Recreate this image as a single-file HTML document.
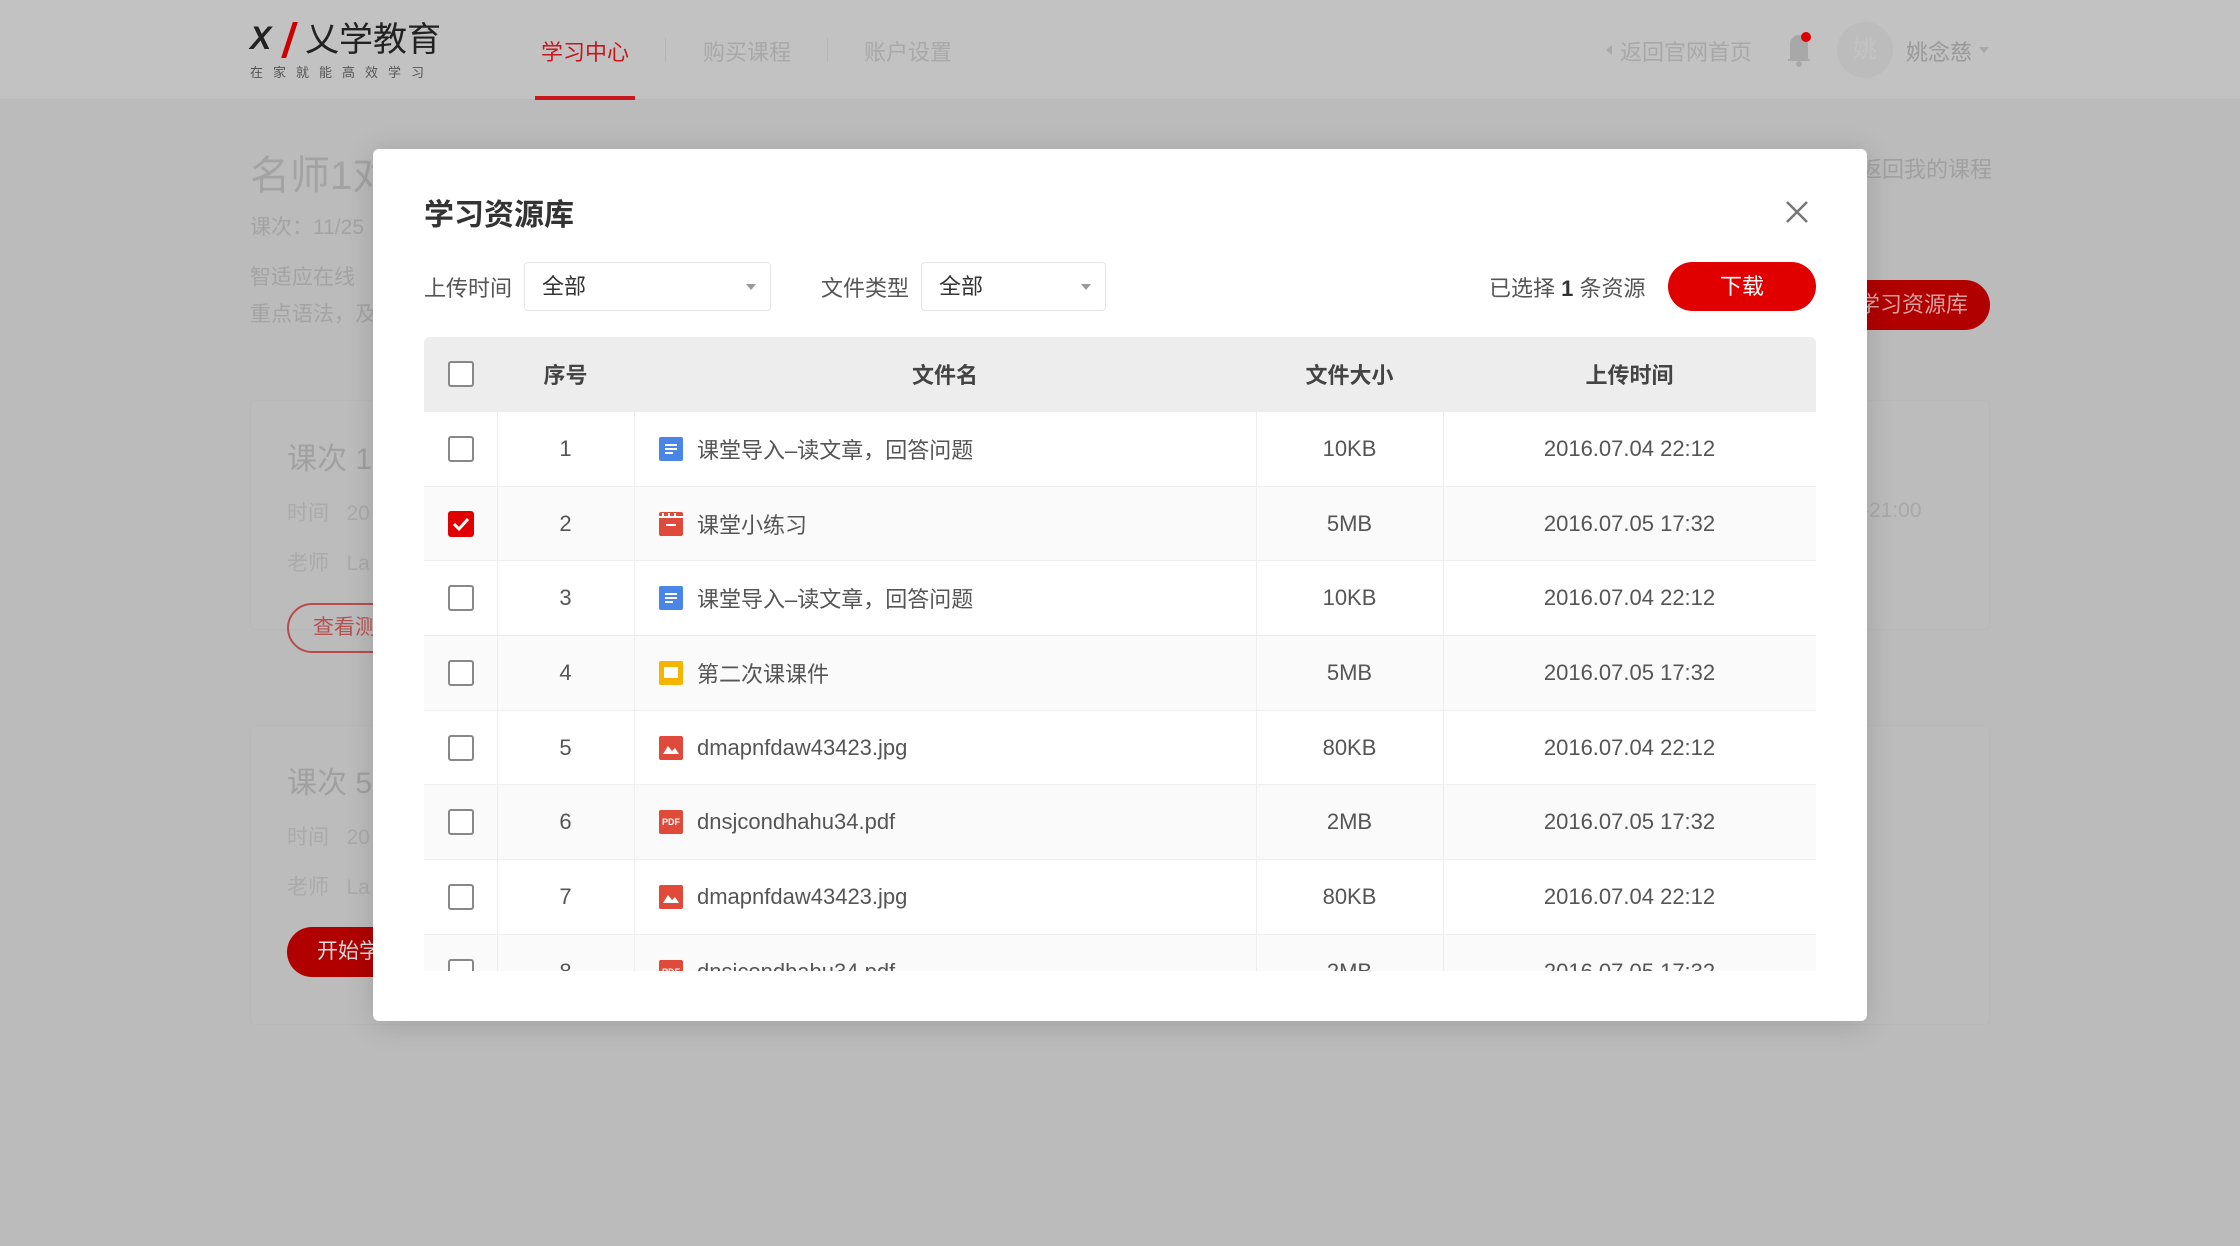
<!DOCTYPE html>
<html><head><meta charset="utf-8"><style>
*{box-sizing:border-box;margin:0;padding:0}
body{width:2240px;height:1246px;overflow:hidden;background:#bbbbbb;font-family:"Liberation Sans","Noto Sans CJK SC",sans-serif;position:relative}
.a{position:absolute;white-space:nowrap}
.hdr{position:absolute;left:0;top:0;width:2240px;height:100px;background:#c2c2c2;border-bottom:1px solid #b8b8b8}
.card{position:absolute;left:250px;width:1740px;background:#bcbcbc;border:1px solid #b8b8b8;border-radius:6px}
.modal{position:absolute;left:373px;top:149px;width:1494px;height:872px;background:#fff;border-radius:6px;box-shadow:0 4px 30px rgba(0,0,0,.15)}
.sel{position:absolute;top:113px;height:49px;border:1px solid #e6e6e6;border-radius:4px;font-size:22px;color:#333;padding-left:17px;line-height:47px}
.sel:after{content:"";position:absolute;right:14px;top:21px;border:5px solid transparent;border-top:6px solid #999}
.tbl{position:absolute;left:51px;top:188px;width:1392px;height:634px;overflow:hidden}
.th{height:74px;background:#ededed;border-radius:6px 6px 0 0;position:relative;font-size:22px;font-weight:bold;color:#444}
.row{height:74.7px;position:relative;border-top:1px solid #eee;font-size:22px;color:#555}
.row.e{background:#fafafa}
.c{position:absolute;top:0;height:100%;display:flex;align-items:center;justify-content:center}
.cb{width:26px;height:26px;border:2px solid #888;border-radius:3px;background:#fff}
.vl{position:absolute;top:0;bottom:0;width:1px;background:#eee}
.ic{width:24px;height:24px;border-radius:2px;margin-right:14px;display:inline-block;position:relative;flex:none}
</style></head><body>
<div class="hdr"></div>
<div class="a" style="left:250px;top:20px;font-size:32px;font-weight:900;color:#222;font-style:italic">X</div>
<div class="a" style="left:287px;top:22px;width:5px;height:36px;background:#c00;transform:skewX(-18deg)"></div>
<div class="a" style="left:305px;top:20px;font-size:34px;color:#222;line-height:40px">乂学教育</div>
<div class="a" style="left:250px;top:62px;font-size:13px;color:#555;letter-spacing:10px">在家就能高效学习</div>
<div class="a" style="left:541px;top:35px;font-size:22px;color:#c8161d">学习中心</div>
<div class="a" style="left:535px;top:96px;width:100px;height:4px;background:#c8161d"></div>
<div class="a" style="left:665px;top:38px;width:1px;height:24px;background:#b5b5b5"></div>
<div class="a" style="left:703px;top:35px;font-size:22px;color:#a8a8a8">购买课程</div>
<div class="a" style="left:827px;top:38px;width:1px;height:24px;background:#b5b5b5"></div>
<div class="a" style="left:864px;top:35px;font-size:22px;color:#a8a8a8">账户设置</div>
<div class="a" style="left:1606px;top:45px;border:5px solid transparent;border-right:6px solid #a8a8a8;border-left:0"></div>
<div class="a" style="left:1620px;top:35px;font-size:22px;color:#a8a8a8">返回官网首页</div>
<svg class="a" style="left:1778px;top:30px" width="34" height="38" viewBox="0 0 34 38"><path d="M13 30 V14 a8 8 0 0 1 16 0 V30 Z M10 30 h22" fill="#a8a8a8" stroke="#a8a8a8" stroke-width="2"/><circle cx="21" cy="34" r="3" fill="#a8a8a8"/><circle cx="28" cy="7" r="5" fill="#d00"/></svg>
<div class="a" style="left:1837px;top:22px;width:56px;height:56px;border-radius:50%;background:#bcbcbc;font-size:24px;color:#c3c3c3;text-align:center;line-height:56px">姚</div>
<div class="a" style="left:1906px;top:35px;font-size:22px;color:#999">姚念慈</div>
<div class="a" style="left:1979px;top:47px;border:5px solid transparent;border-top:6px solid #a8a8a8"></div>
<div class="a" style="left:250px;top:143px;font-size:40px;color:#a3a3a3">名师1对</div>
<div class="a" style="left:250px;top:211px;font-size:21px;color:#a3a3a3">课次：11/25</div>
<div class="a" style="left:250px;top:261px;font-size:21px;color:#a3a3a3">智适应在线</div>
<div class="a" style="left:250px;top:298px;font-size:21px;color:#a3a3a3">重点语法，及</div>
<div class="a" style="left:1860px;top:152px;font-size:22px;color:#a0a0a0">返回我的课程</div>
<div class="a" style="left:1800px;top:280px;width:190px;height:50px;border-radius:25px;background:#b00000;color:#d9a0a0;font-size:22px;line-height:50px;padding-left:58px">学习资源库</div>
<div class="card" style="top:400px;height:230px"></div>
<div class="card" style="top:725px;height:300px"></div>
<div class="a" style="left:287px;top:434px;font-size:30px;color:#a0a0a0">课次 1</div>
<div class="a" style="left:287px;top:497px;font-size:21px;color:#aaa">时间&nbsp;&nbsp;&nbsp;20</div>
<div class="a" style="left:287px;top:547px;font-size:21px;color:#aaa">老师&nbsp;&nbsp;&nbsp;La</div>
<div class="a" style="left:287px;top:603px;width:120px;height:50px;border:2px solid #b84c4c;border-radius:25px;font-size:21px;color:#b85050;line-height:46px;padding-left:24px">查看测</div>
<div class="a" style="left:1862px;top:499px;font-size:21px;color:#a8a8a8">-21:00</div>
<div class="a" style="left:287px;top:758px;font-size:30px;color:#a0a0a0">课次 5</div>
<div class="a" style="left:287px;top:821px;font-size:21px;color:#aaa">时间&nbsp;&nbsp;&nbsp;20</div>
<div class="a" style="left:287px;top:871px;font-size:21px;color:#aaa">老师&nbsp;&nbsp;&nbsp;La</div>
<div class="a" style="left:287px;top:927px;width:120px;height:50px;background:#b00000;border-radius:25px;font-size:21px;color:#ddd;line-height:50px;padding-left:30px">开始学</div>
<div class="modal">
 <div class="a" style="left:51px;top:41px;font-size:30px;font-weight:bold;color:#333">学习资源库</div>
 <svg class="a" style="left:1412px;top:51px" width="24" height="24"><path d="M2 2L22 22M22 2L2 22" stroke="#777" stroke-width="2.5"/></svg>
 <div class="a" style="left:51px;top:122px;font-size:22px;color:#555">上传时间</div>
 <div class="sel" style="left:151px;width:247px">全部</div>
 <div class="a" style="left:448px;top:122px;font-size:22px;color:#555">文件类型</div>
 <div class="sel" style="left:548px;width:185px">全部</div>
 <div class="a" style="left:1116px;top:122px;font-size:22px;color:#555">已选择 <b style="color:#333">1</b> 条资源</div>
 <div class="a" style="left:1295px;top:113px;width:148px;height:49px;border-radius:25px;background:#e00000;color:#fff;font-size:22px;text-align:center;line-height:49px">下载</div>
 <div class="tbl">
  <div class="th">
   <div class="c" style="left:0;width:73px"><div class="cb"></div></div>
   <div class="c" style="left:73px;width:137px">序号</div>
   <div class="c" style="left:210px;width:622px">文件名</div>
   <div class="c" style="left:832px;width:187px">文件大小</div>
   <div class="c" style="left:1019px;width:373px">上传时间</div>
  </div>
  <div id="rows"></div>
  <div class="vl" style="left:73px;top:74px"></div><div class="vl" style="left:210px;top:74px"></div><div class="vl" style="left:832px;top:74px"></div><div class="vl" style="left:1019px;top:74px"></div>
 </div>
</div>
<script>
var d=[["doc","课堂导入–读文章，回答问题","10KB","2016.07.04 22:12"],["cal","课堂小练习","5MB","2016.07.05 17:32"],["doc","课堂导入–读文章，回答问题","10KB","2016.07.04 22:12"],["ppt","第二次课课件","5MB","2016.07.05 17:32"],["img","dmapnfdaw43423.jpg","80KB","2016.07.04 22:12"],["pdf","dnsjcondhahu34.pdf","2MB","2016.07.05 17:32"],["img","dmapnfdaw43423.jpg","80KB","2016.07.04 22:12"],["pdf","dnsjcondhahu34.pdf","2MB","2016.07.05 17:32"]];
var ic={doc:'<span class="ic" style="background:#4a86e8"><svg width="24" height="24"><path d="M6 8h12M6 12h12M6 16h8" stroke="#fff" stroke-width="2"/></svg></span>',
cal:'<span class="ic" style="background:#e04a3b"><svg width="24" height="24"><path d="M0 5h24M7 13h10" stroke="#fff" stroke-width="2"/><path d="M4 1v3M10 1v3M16 1v3" stroke="#fff" stroke-width="2"/></svg></span>',
ppt:'<span class="ic" style="background:#f4b400"><svg width="24" height="24"><rect x="5" y="6" width="14" height="11" fill="#fff"/></svg></span>',
img:'<span class="ic" style="background:#e04a3b"><svg width="24" height="24"><path d="M4 18l5-8 4 5 3-3 4 6z" fill="#fff"/></svg></span>',
pdf:'<span class="ic" style="background:#e04a3b;color:#fff;font-size:9px;font-weight:bold;text-align:center;line-height:24px">PDF</span>'};
var h="";d.forEach(function(r,i){h+='<div class="row'+(i%2?' e':'')+'"><div class="c" style="left:0;width:73px">'+(i==1?'<div class="cb" style="background:#e00000;border-color:#e00000"><svg width="22" height="22"><path d="M4 11l5 5 9-10" stroke="#fff" stroke-width="3" fill="none"/></svg></div>':'<div class="cb"></div>')+'</div><div class="c" style="left:73px;width:137px">'+(i+1)+'</div><div class="c" style="left:235px;justify-content:flex-start">'+ic[r[0]]+r[1]+'</div><div class="c" style="left:832px;width:187px">'+r[2]+'</div><div class="c" style="left:1019px;width:373px">'+r[3]+'</div></div>'});
document.getElementById("rows").innerHTML=h;
</script>
</body></html>
